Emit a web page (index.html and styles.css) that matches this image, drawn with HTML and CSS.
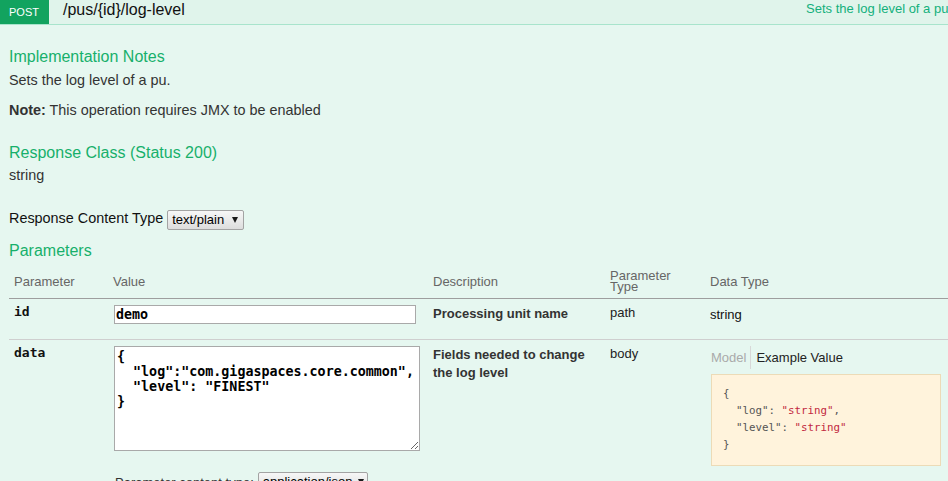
FILE: index.html
```html
<!DOCTYPE html>
<html lang="en">
<head>
<meta charset="utf-8">
<title>POST /pus/{id}/log-level</title>
<link rel="stylesheet" href="styles.css">
</head>
<body>
<div class="op">
  <div class="op-heading">
    <span class="method">POST</span>
    <span class="path">/pus/{id}/log-level</span>
    <span class="summary">Sets the log level of a pu.</span>
  </div>
  <div class="op-content">
    <h4 class="section-title">Implementation Notes</h4>
    <p class="lead">Sets the log level of a pu.</p>
    <p class="note"><strong>Note:</strong> This operation requires JMX to be enabled</p>

    <h4 class="section-title title-response">Response Class (Status 200)</h4>
    <div class="response-model">string</div>

    <div class="content-type">
      <label class="content-type-label" for="rct">Response Content Type</label>
      <span class="select">
        <select id="rct"><option>text/plain</option></select>
      </span>
    </div>

    <h4 class="section-title title-params">Parameters</h4>
    <table class="params">
      <colgroup>
        <col class="col-name">
        <col class="col-value">
        <col class="col-desc">
        <col class="col-ptype">
        <col class="col-dtype">
      </colgroup>
      <thead>
        <tr>
          <th>Parameter</th>
          <th>Value</th>
          <th>Description</th>
          <th>Parameter Type</th>
          <th>Data Type</th>
        </tr>
      </thead>
      <tbody>
        <tr class="row-first">
          <td class="cell-name">id</td>
          <td class="cell-value"><input class="param-input" type="text" value="demo"></td>
          <td class="cell-desc">Processing unit name</td>
          <td class="cell-ptype">path</td>
          <td class="cell-dtype">string</td>
        </tr>
        <tr class="row-body">
          <td class="cell-name">data</td>
          <td class="cell-value">
            <textarea class="param-body">{
  "log":"com.gigaspaces.core.common",
  "level": "FINEST"
}</textarea>
            <div class="param-content-type">
              <span>Parameter content type:</span>
              <span class="select select-narrow">
                <select><option>application/json</option></select>
              </span>
            </div>
          </td>
          <td class="cell-desc">Fields needed to change the log level</td>
          <td class="cell-ptype">body</td>
          <td class="cell-dtype">
            <div class="sig-tabs">
              <span class="tab-model">Model</span>
              <span class="tab-example">Example Value</span>
            </div>
            <pre class="example">{
  <span class="k">"log"</span>: <span class="s">"string"</span>,
  <span class="k">"level"</span>: <span class="s">"string"</span>
}</pre>
          </td>
        </tr>
      </tbody>
    </table>
  </div>
</div>
</body>
</html>
```

FILE: styles.css
```css
html, body {
  margin: 0;
  padding: 0;
  overflow: hidden;
  background: #e6f7f0;
}

body {
  font-family: "Liberation Sans", Arial, sans-serif;
  color: #333;
}

.op {
  width: 962px;
}

/* heading bar */
.op-heading {
  display: flex;
  align-items: flex-start;
  height: 24px;
  padding-right: 10px;
  background: #e0f4eb;
  border-bottom: 1px solid #a8e4cc;
}

.method {
  background: #12a35f;
  color: #fff;
  font-size: 11px;
  line-height: 24px;
  padding: 0 10px 0 9px;
}

.path {
  margin-left: 14px;
  font-size: 16px;
  line-height: 20px;
  color: #111;
}

.summary {
  margin-left: auto;
  font-size: 13px;
  line-height: 17px;
  color: #13b07c;
  white-space: nowrap;
}

/* content */
.op-content {
  padding: 22px 9px 60px;
  background: #e6f7f0;
}

.section-title {
  margin: 0;
  font-size: 16px;
  line-height: 20px;
  font-weight: normal;
  color: #17b06b;
}

.lead {
  margin: 4px 0 0;
  font-size: 14.4px;
  line-height: 18px;
}

.note {
  margin: 12px 0 0;
  font-size: 14.4px;
  line-height: 18px;
}

.title-response {
  margin-top: 24px;
}

.response-model {
  margin-top: 3px;
  font-size: 14.4px;
  line-height: 18px;
}

.content-type {
  display: flex;
  align-items: flex-start;
  gap: 4px;
  margin-top: 25px;
  font-size: 14.4px;
  line-height: 18px;
  color: #111;
}

.content-type .select {
  margin-top: 1px;
}

.title-params {
  margin-top: 11px;
}

/* select */
.select {
  position: relative;
  display: inline-block;
}

.select select {
  -webkit-appearance: none;
  appearance: none;
  display: block;
  margin: 0;
  height: 20px;
  padding: 0 18px 0 4px;
  border: 1px solid #a3a3a3;
  border-radius: 2px;
  background: linear-gradient(#f7f7f7, #dddddd);
  font-family: "Liberation Sans", Arial, sans-serif;
  font-size: 13px;
  line-height: 18px;
  color: #000;
}

.select::after {
  content: "";
  position: absolute;
  right: 6px;
  top: 7px;
  width: 0;
  height: 0;
  border-left: 3.5px solid transparent;
  border-right: 3.5px solid transparent;
  border-top: 6px solid #1a1a1a;
  pointer-events: none;
}

.select-narrow select {
  padding-right: 14px;
}

.select-narrow::after {
  right: 4px;
}

/* parameters table */
.params {
  width: 944px;
  table-layout: fixed;
  border-collapse: separate;
  border-spacing: 0;
  font-size: 13px;
}

.col-name { width: 99px; }
.col-value { width: 320px; }
.col-desc { width: 177px; }
.col-ptype { width: 100px; }
.col-dtype { width: 248px; }

.params th {
  padding: 9px 5px 6px;
  border-bottom: 1px solid #9e9e9e;
  font-weight: normal;
  line-height: 11px;
  color: #666;
  text-align: left;
  vertical-align: middle;
}

.params td {
  padding: 6px 5px 15px;
  vertical-align: top;
  line-height: 19px;
  border-bottom: 1px solid #cfcfcf;
}

.params td.cell-name {
  padding-top: 5px;
  font-family: "DejaVu Sans Mono", "Liberation Mono", monospace;
  font-weight: bold;
  line-height: 15px;
  color: #111;
}

.params td.cell-desc {
  font-weight: bold;
  line-height: 18px;
  color: #333;
}

.params td.cell-ptype {
  padding-top: 4px;
  color: #222;
}

.params td.cell-dtype {
  color: #111;
}

.param-input {
  display: block;
  box-sizing: border-box;
  width: 302px;
  height: 19px;
  margin: 0 0 0 1px;
  padding: 0 1px;
  border: 1px solid #a9a9a9;
  background: #fff;
  font-family: "DejaVu Sans Mono", "Liberation Mono", monospace;
  font-weight: bold;
  font-size: 13.333px;
  color: #000;
}

.param-body {
  display: block;
  box-sizing: border-box;
  width: 306px;
  height: 105px;
  margin: 0 0 0 1px;
  padding: 2px;
  border: 1px solid #a9a9a9;
  background: #fff;
  font-family: "DejaVu Sans Mono", "Liberation Mono", monospace;
  font-weight: bold;
  font-size: 13.333px;
  line-height: 15px;
  color: #000;
}

.param-content-type {
  display: flex;
  align-items: center;
  gap: 4px;
  margin: 21px 0 0 2px;
  font-size: 13px;
  line-height: 17px;
  color: #333;
}

.sig-tabs {
  display: flex;
  margin-left: 1px;
  font-size: 13px;
  line-height: 23px;
}

.tab-model {
  padding-right: 4px;
  color: #aaa;
}

.tab-example {
  padding-left: 5px;
  border-left: 1px solid #d8d8d8;
  color: #222;
}

.example {
  box-sizing: border-box;
  width: 230px;
  margin: 5px 0 0 1px;
  padding: 10px 11px 12px;
  background: #fff3dc;
  border: 1px solid #ecdbb7;
  font-family: "DejaVu Sans Mono", "Liberation Mono", monospace;
  font-size: 10.8px;
  line-height: 17px;
  color: #555;
  white-space: pre;
}

.example .k {
  color: #555;
}

.example .s {
  color: #c2293f;
}
```
